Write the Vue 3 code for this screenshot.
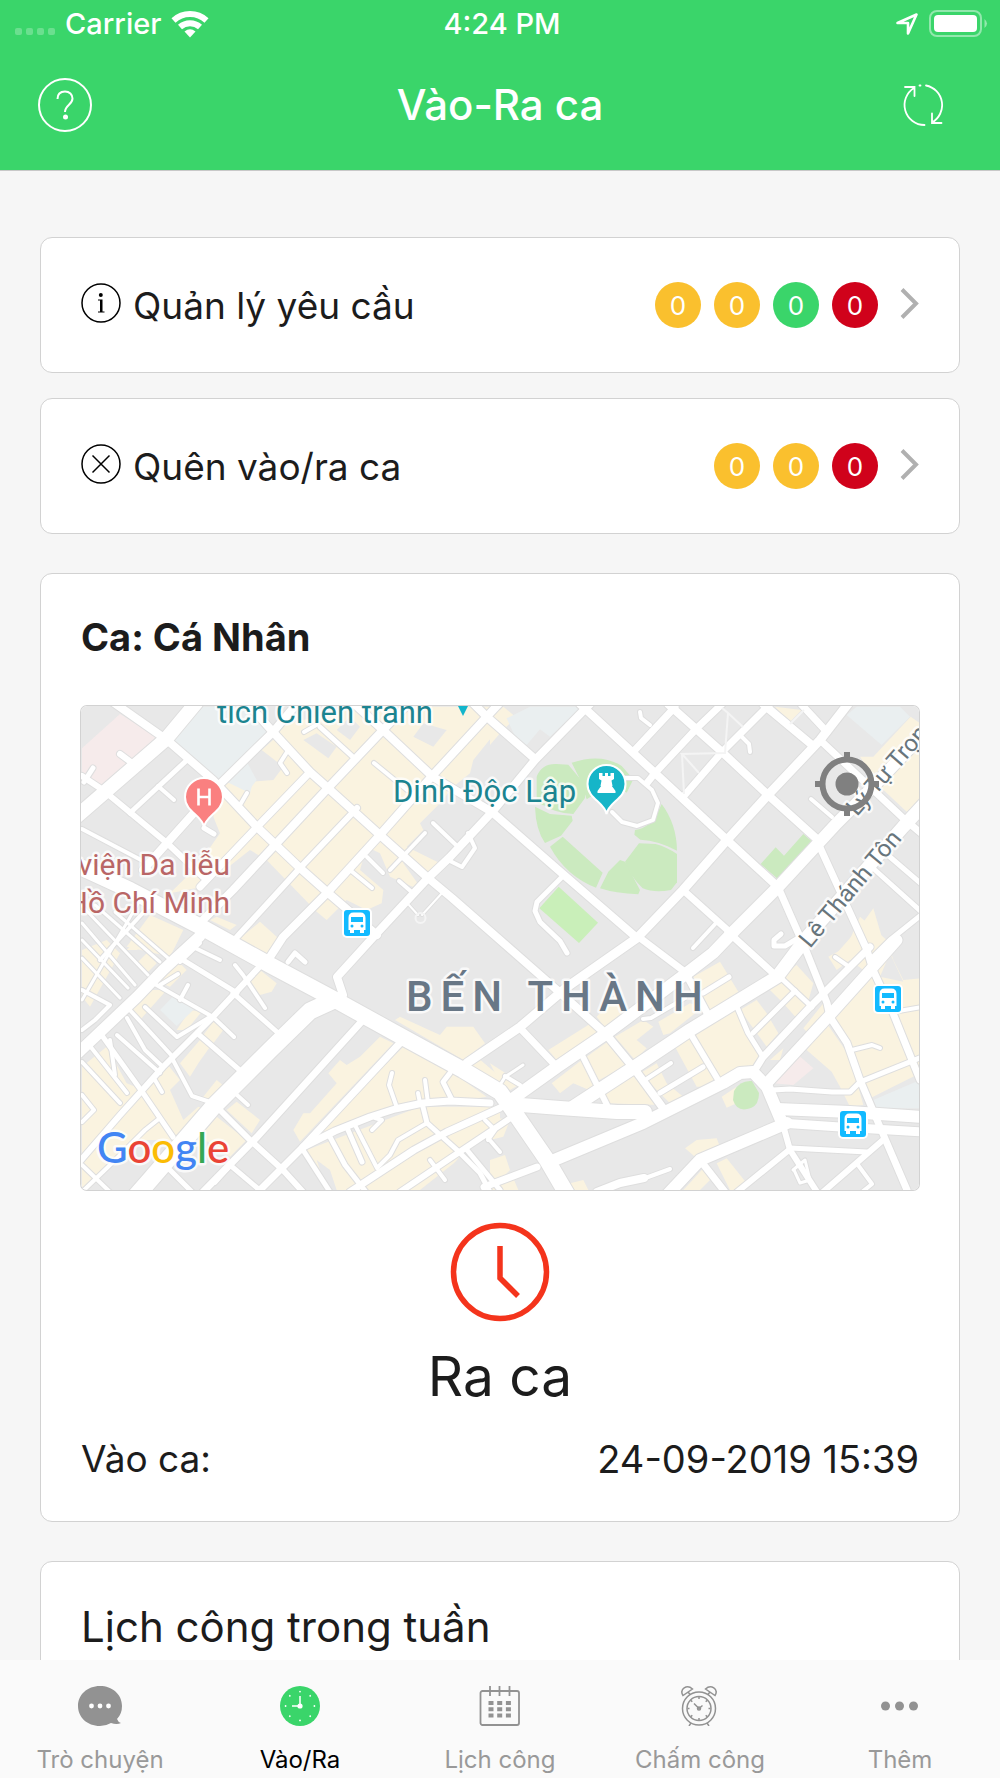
<script setup>
const requests = [
  { id: 'manage', icon: 'info', label: 'Quản lý yêu cầu', badges: ['amber', 'amber', 'green', 'red'] },
  { id: 'missed', icon: 'cross', label: 'Quên vào/ra ca', badges: ['amber', 'amber', 'red'] },
]

const tabs = [
  { id: 'chat', label: 'Trò chuyện' },
  { id: 'shift', label: 'Vào/Ra', active: true },
  { id: 'calendar', label: 'Lịch công' },
  { id: 'alarm', label: 'Chấm công' },
  { id: 'more', label: 'Thêm' },
]

// Map land use, drawn in four tiles at three units per map pixel
const tiles = [
  {
    at: 'translate(70 690) scale(.33333)',
    blocks: [
      ['cream', '620,110 860,50 1290,50 1290,110 1210,210 1200,250 1150,290 1110,340 1050,400 1060,420 1010,470 1110,520 1050,600 960,560 930,490 890,470 870,540 940,600 935,640 890,660 830,630 770,690 740,665 590,510 540,480 400,590 300,610 380,530 450,430 430,380 455,290 480,275 540,300 550,275 610,270 640,230 575,180 620,140'],
      ['cream', '420,690 440,680 500,705 480,720'],
      ['cream', '510,745 570,695 625,745 600,800 480,780'],
      ['cream', '170,770 240,675 340,720 300,800'],
      ['land', '700,150 740,130 800,170 775,205'],
      ['land', '1060,100 1130,120 1090,170 1030,140'],
      ['land', '800,120 840,80 870,110 840,150'],
      ['land', '1050,590 1000,520 1020,500 1070,560'],
      ['blue', '300,150 400,50 590,50 600,130 540,190 440,300 420,270'],
      ['blue', '470,275 530,215 560,270 545,290 540,310'],
      ['pink', '36,175 150,72 258,140 100,292 36,250'],
    ],
  },
  {
    at: 'translate(490 690) scale(.33333)',
    blocks: [
      ['cream', '10,80 40,50 78,82 48,112'],
      ['cream', '0,110 30,130 0,165'],
      ['cream', '855,50 935,60 900,95'],
      ['cream', '1110,200 1150,200 1262,80 1290,100 1290,340 1250,365 1170,290'],
      ['cream', '1110,710 1150,655 1190,790 1040,790'],
      ['blue', '50,85 120,50 275,50 180,140 150,118 110,165 80,150'],
      ['blue', '1070,75 1100,50 1230,50 1260,80 1175,165'],
    ],
  },
  {
    at: 'translate(70 940) scale(.33333)',
    blocks: [
      ['cream', '36,30 110,0 150,40 60,200 36,170'],
      ['cream', '170,30 200,0 220,20 200,30'],
      ['cream', '200,70 230,40 260,70 230,100'],
      ['cream', '180,210 230,150 290,150 210,240'],
      ['cream', '36,380 110,320 170,430 220,450 290,370 330,420 300,450 340,540 385,500 410,510 300,600 200,600 60,745 36,740'],
      ['cream', '330,370 390,300 420,320 385,370 360,410'],
      ['cream', '530,130 570,90 620,130 605,155 570,165'],
      ['cream', '250,120 320,60 350,90 300,140'],
      ['cream', '320,270 360,210 395,215 350,270'],
      ['cream', '400,285 430,245 460,270 430,310'],
      ['cream', '400,470 440,420 465,440 430,490'],
      ['cream', '500,0 625,0 575,65 440,10'],
      ['cream', '470,510 500,485 570,540 545,580'],
      ['cream', '390,590 440,530 530,600 480,650'],
      ['cream', '670,570 700,520 720,520 800,430 775,400 810,360 830,375 870,350 930,290 970,310 690,605'],
      ['cream', '975,240 990,230 1110,285 1130,260 1210,260 1245,310 1180,360'],
      ['cream', '1000,320 1150,400 1250,470 1050,500 900,530 780,580 750,570'],
      ['cream', '710,630 1050,500 1290,500 1290,560 1050,750 790,750'],
      ['cream', '1195,370 1220,350 1290,410 1290,430'],
      ['land', '1200,610 1290,540 1290,750 1090,750'],
      ['land', '740,660 780,690 800,750 770,750'],
      ['blue', '270,210 310,168 372,208 320,258'],
    ],
  },
  {
    at: 'translate(490 940) scale(.33333)',
    blocks: [
      ['cream', '175,330 310,245 330,270 200,360'],
      ['cream', '320,230 385,160 420,230 350,270'],
      ['cream', '375,290 460,240 490,260 440,300 470,325 435,360'],
      ['cream', '505,245 600,190 640,200 540,280 520,285'],
      ['cream', '610,110 690,65 745,155 660,210'],
      ['cream', '290,350 360,300 420,370 310,430'],
      ['cream', '185,430 275,360 320,460 250,430 210,460'],
      ['cream', '350,490 340,460 435,405 510,495'],
      ['cream', '450,400 500,370 530,430 580,470 540,490'],
      ['cream', '555,320 600,290 690,440 620,440'],
      ['cream', '615,280 735,205 820,350 780,390 695,420'],
      ['cream', '830,140 920,75 970,130 950,200 920,235 880,190'],
      ['cream', '750,210 800,180 830,220 865,280 830,320'],
      ['cream', '940,265 1000,190 1010,210 950,275'],
      ['cream', '840,360 880,325 870,360'],
      ['cream', '1015,50 1070,20 1110,-70 1190,0 1210,60 1240,120 1290,115 1290,400 1130,480 1100,410 1030,230 1120,90 1080,60 1040,90'],
      ['land', '1170,110 1200,40 1240,125'],
      ['cream', '950,330 1010,250 1080,350 1120,495 1080,500 1050,440 1025,395'],
      ['cream', '0,370 95,430 60,450 30,430'],
      ['cream', '585,625 620,600 680,595 690,620 620,655'],
      ['cream', '680,670 710,655 770,730 740,750 720,750'],
      ['cream', '580,750 640,685 660,720 630,750'],
      ['cream', '240,730 280,720 295,750 240,750'],
      ['cream', '0,660 45,645 60,690 0,750'],
      ['cream', '0,720 70,715 85,750 0,750'],
      ['cream', '0,530 60,540 40,590 0,600'],
      ['cream', '695,470 740,440 740,490 710,503'],
      ['blue', '1150,480 1290,420 1290,505 1160,505'],
      ['pink', '850,430 925,345 970,385 910,435'],
    ],
  },
]

// [width, points]
const roads = [
  [14, '76,817 166,739 196,703'],
  [8, '110,700 167,740 213,780 257,827 300,868 327,892 377,935'],
  [8, '247,703 273,732 310,772 328,788 380,835 428,878 452,898 500,940 557,990 605,1033 633,1067 663,1108'],
  [8, '350,700 383,730 433,777 492,812 564,875 637,938'],
  [7, '640,938 685,972 707,1013'],
  [8, '470,700 487,717 535,759'],
  [8, '580,704 655,773 727,840 778,887'],
  [8, '668,704 722,752 768,795 818,840'],
  [8, '763,704 812,745'],
  [7, '801,704 827,732'],
  [7, '820,740 903,818 922,834'],
  [8, '590,704 535,760 493,811 450,857 428,878 377,933 337,977 343,995'],
  [8, '505,697 433,775 380,835 327,893 283,937 270,957'],
  [8, '412,700 383,730 328,788 275,845 233,890 203,920'],
  [8, '300,700 273,732 217,787 167,843 143,870'],
  [7, '310,772 257,827 200,887'],
  [6, '357,808 300,868 237,937'],
  [7, '770,704 722,752 683,797'],
  [7, '722,704 697,728 655,773 647,783'],
  [7, '675,707 633,752'],
  [9, '848,704 820,740 768,795 727,840 683,890 637,938 567,987 520,1027 467,1063'],
  [12, '925,732 870,790 837,823 778,887 735,930 713,953 687,973 607,1033 557,1067 508,1102'],
  [13, '925,803 903,827 807,937 777,977 690,1030 633,1068 573,1107'],
  [7, '778,887 800,937 807,953 827,1003 830,1017 847,1043 860,1080 877,1120 907,1190'],
  [7, '818,843 867,950 873,970 893,1013 920,1080'],
  [11, '897,940 873,967 830,1015 767,1083'],
  [7, '870,947 810,1007 763,1057 753,1073'],
  [5, '925,912 890,940 870,960'],
  [5, '875,870 925,915'],
  [5, '890,857 925,887'],
  [16, '76,865 130,890 203,928 270,965 330,997 397,1034 463,1070 500,1092 512,1109 547,1160 568,1196'],
  [17, '334,1000 310,1011 270,1050 213,1107 150,1180 136,1196'],
  [11, '200,936 163,970 137,997 78,1053'],
  [7, '363,1020 257,1137 203,1192'],
  [7, '400,1043 303,1147 258,1192'],
  [7, '303,1147 335,1131 370,1117 395,1109 423,1103 450,1101 490,1103'],
  [14, '508,1104 560,1108 617,1112 645,1112'],
  [12, '547,1163 643,1123 723,1083 740,1073 753,1072 767,1087 783,1125'],
  [6, '783,1125 790,1150 817,1192'],
  [12, '777,1109 850,1112 922,1117'],
  [9, '780,1123 840,1127 922,1132'],
  [12, '787,1123 700,1160 668,1194'],
  [5, '773,1090 790,1089 832,1092 850,1092 860,1082 922,1057'],
  [4, '893,1012 922,1007'],
  [5, '790,1148 867,1152'],
  [6, '883,1140 823,1192'],
  [6, '789,1150 737,1192'],
  [4, '670,1169 640,1180'],
  [8, '644,1178 620,1183 597,1192'],
  [7, '700,1160 725,1192'],
  [7, '484,1187 537,1167'],
  [7, '520,1028 557,1067'],
  [6, '583,1057 607,1105'],
  [6, '690,1033 720,1083'],
  [5, '737,1007 748,1033 763,1057'],
  [5, '780,977 812,1007'],
  [5, '795,991 753,1033'],
  [5, '729,977 703,993'],
  [5, '660,1093 703,1067'],
  [4, '645,1080 671,1063'],
  [7, '728,932 773,973'],
  [7, '683,890 733,935'],
  [4, '643,1019 651,1018 685,998'],
  [4, '717,922 693,948'],
  [4, '625,778 638,778 652,790 658,803 653,820 637,826 622,822 612,812'],
  [5, '562,877 537,902 535,911 540,922 560,941 567,953'],
  [5, '781,934 774,940 774,946 785,946 800,937'],
  [4, '811,799 832,817'],
  [4, '640,712 641,718 650,725'],
  [4, '741,736 749,744 750,752'],
  [4, '520,1085 505,1076'],
  [3, '523,1065 505,1077 500,1085'],
  [4, '852,1050 872,1045 880,1048'],
  [4, '835,957 848,966'],
  [3, '793,1170 805,1160 810,1180 800,1183 794,1170'],
  [4, '858,1165 872,1184 862,1192'],
  // streets west of the boulevard
  [6, '82,776 103,790 167,843 203,877'],
  [5, '187,760 130,813'],
  [4, '158,786 174,800'],
  [4, '82,829 143,861 150,870'],
  [6, '120,754 132,763'],
  [5, '93,768 84,782'],
  [5, '204,828 214,834'],
  [4, '374,763 407,790'],
  [4, '433,823 457,846'],
  [4, '468,833 475,848 462,867 448,860'],
  [4, '367,857 383,873'],
  [4, '350,870 372,888'],
  [4, '399,881 414,894'],
  [4, '425,833 390,870'],
  [4, '287,752 280,763 287,773'],
  [4, '247,793 240,805'],
  [5, '320,727 353,757'],
  [4, '304,732 318,724'],
  [2, '442,893 422,915'],
  [2, '409,905 418,915'],
  [6, '76,1166 120,1115 163,1067 210,1020 263,963'],
  [4, '82,1192 110,1165 145,1130 160,1118'],
  [3, '82,923 135,985'],
  [3, '82,940 128,988'],
  [3, '82,958 120,998'],
  [3, '82,906 148,975'],
  [3, '95,905 160,962'],
  [3, '115,912 168,958'],
  [3, '140,900 82,1000'],
  [4, '150,905 100,960'],
  [4, '82,990 110,1005 95,1020 82,1030'],
  [4, '128,1008 173,1057'],
  [4, '145,1007 177,1037 210,1017'],
  [4, '117,1035 160,1073'],
  [4, '153,983 213,1017'],
  [5, '103,1037 143,1093 173,1137'],
  [4, '90,1046 127,1093'],
  [4, '82,1062 120,1103'],
  [4, '110,1040 115,1075'],
  [4, '82,1095 94,1110 82,1122'],
  [4, '173,1060 192,1096 210,1102'],
  [5, '197,1033 243,1073'],
  [4, '213,1017 234,1037'],
  [5, '233,993 277,1032'],
  [5, '183,960 237,993'],
  [4, '193,947 220,960'],
  [4, '180,962 200,943'],
  [4, '235,965 243,975 265,1008'],
  [4, '160,985 178,974'],
  [4, '188,985 180,1000'],
  [5, '288,962 295,953 305,962'],
  [6, '220,1110 250,1140 283,1170 303,1192'],
  [5, '170,1170 192,1192'],
  [5, '230,1165 262,1192'],
  [4, '215,1183 240,1155'],
  [4, '237,1095 248,1105'],
  [4, '155,1080 162,1092'],
  [4, '163,1067 145,1050 127,1018'],
  [4, '82,1165 110,1192'],
  // centre
  [5, '303,1150 330,1192'],
  [5, '330,1137 345,1165 366,1192'],
  [5, '348,1130 362,1162'],
  [4, '372,1130 382,1120 375,1118'],
  [7, '350,1192 414,1150 447,1132 500,1108'],
  [6, '400,1192 455,1155 515,1115'],
  [5, '423,1107 427,1123 457,1150 480,1173 490,1192'],
  [4, '427,1123 398,1140 390,1155 377,1168 355,1125'],
  [4, '430,1160 445,1180'],
  [4, '392,1073 389,1085 396,1105'],
  [4, '425,1080 428,1103'],
  [4, '418,1093 420,1103'],
  [5, '450,1073 443,1082 452,1100'],
  [4, '488,1138 500,1152'],
  [4, '485,1120 495,1130 488,1140'],
  [5, '467,1150 500,1190'],
]

const stops = [
  [357, 923],
  [888, 999],
  [853, 1124],
]
</script>

<template>
  <div class="app">
    <header class="header">
      <div class="status">
        <div class="status-left">
          <span class="signal"><i v-for="n in 4" :key="n"></i></span>
          <span>Carrier</span>
          <svg class="wifi" width="38" height="28" viewBox="0 0 38 28" aria-hidden="true">
            <g fill="none" stroke="#fff" stroke-width="6">
              <path d="M2.500 10.500a24.500 24.500 0 0 1 33 0" />
              <path d="M9 17a15 15 0 0 1 20 0" />
            </g>
            <path d="M13.500 21.500q5.500-4.500 11 0L19 27.500z" fill="#fff" />
          </svg>
        </div>
        <time>4:24 PM</time>
        <div class="status-right">
          <svg width="24" height="24" viewBox="0 0 24 24" aria-hidden="true">
            <path d="M21.500 2.500 13 21.500V11H2.500z" fill="none" stroke="#fff" stroke-width="2.600" stroke-linejoin="round" />
          </svg>
          <svg width="60" height="28" viewBox="0 0 60 28" aria-hidden="true">
            <rect x="1" y="1" width="51" height="25" rx="7" fill="none" stroke="#fff" stroke-opacity=".45" stroke-width="2" />
            <rect x="5" y="5" width="43" height="17" rx="4" fill="#fff" />
            <path d="M55.500 9q5 4.500 0 9z" fill="#fff" fill-opacity=".45" />
          </svg>
        </div>
      </div>
      <div class="navbar">
        <button class="nav-btn" type="button" aria-label="Trợ giúp">
          <svg width="54" height="54" viewBox="0 0 54 54" aria-hidden="true">
            <g fill="none" stroke="#fff">
              <circle cx="27" cy="27" r="26" stroke-width="2" />
              <path d="M19.500 21c0-5 3-7.500 7.500-7.500s7.500 3 7.500 7c0 6-7.500 6.500-7.500 13.500" stroke-width="2" />
            </g>
            <circle cx="27.500" cy="39" r="2.500" fill="#fff" />
          </svg>
        </button>
        <h1>Vào-Ra ca</h1>
        <button class="nav-btn refresh" type="button" aria-label="Làm mới">
          <svg width="42" height="42" viewBox="0 0 42 42" fill="none" stroke="#fff" stroke-width="1.800" stroke-linecap="round" aria-hidden="true">
            <path d="M25 1.500A20 20 0 0 1 31 38.500M31 29.500v9.500h9.500" />
            <path d="M23.500 41A20 20 0 0 1 13 4M4 3h9.500v9" />
            <path d="M18.500 1.500h1" />
          </svg>
        </button>
      </div>
    </header>

    <main class="content">
      <nav class="requests">
        <a v-for="row in requests" :key="row.id" class="card request" :href="'#' + row.id">
          <svg class="request-icon" width="40" height="40" viewBox="0 0 40 40" fill="none" stroke="#000" stroke-width="1.500" aria-hidden="true">
            <circle cx="20" cy="20" r="19" />
            <path v-if="row.icon === 'cross'" d="M11.500 11.500l17 17M28.500 11.500l-17 17" />
            <g v-else fill="#000" stroke="none">
              <circle cx="19.800" cy="12" r="2" />
              <path d="M17 16.500h4.500v12h2v1h-6.500v-1h2v-11h-2z" />
            </g>
          </svg>
          <span class="request-label">{{ row.label }}</span>
          <span class="badges">
            <span v-for="(tone, i) in row.badges" :key="i" class="badge" :class="tone">0</span>
          </span>
          <svg class="chevron" width="19" height="32" viewBox="0 0 19 32" aria-hidden="true">
            <path d="M2 2.500 16 16.500 2 30.500" fill="none" stroke="#b0b0b0" stroke-width="4" />
          </svg>
        </a>
      </nav>

      <section class="card shift">
        <h2>Ca: Cá Nhân</h2>
        <div class="map">
          <svg class="map-canvas" viewBox="81 706 838 484" role="img" aria-label="Bản đồ Bến Thành">
            <rect x="81" y="706" width="838" height="484" class="land" />
            <g v-for="tile in tiles" :key="tile.at" :transform="tile.at">
              <polygon v-for="(b, i) in tile.blocks" :key="i" :class="b[0]" :points="b[1]" />
            </g>
            <g class="park" transform="translate(490 690) scale(.33333)">
              <path d="M140 260q15-40 60-38l35 2 50 60v40l-35 48q-60-5-85-25l-25-7z" />
              <path d="M245 218q90-30 150 10l35 40-20 40-40-30-80 50-20-60z" />
              <path d="M135 350l45 22 65 5 3 15-35 45-48 22q-28-40-30-109z" />
              <path d="M180 470l38-30 120 108-20 45q-90-35-138-123z" />
              <path d="M390 510l15 5 45 85-5 13q-70-3-115-18l25-50z" />
              <path d="M405 515l42-55 50 2q35 10 64 30v85l-18 23q-50 10-85-5-40-40-53-80z" />
              <path d="M435 420q50-5 80-78 45 60 46 140-55-30-110-33l-18-15z" />
              <path d="M148 655l58-65 118 108-57 61z" fill="#c9efb9" />
              <path d="M812 522l45-50 25 25 58-65 27 23-100 115z" />
            </g>
            <path class="park" d="M734 1091q6-11 18-10l7 12q0 12-8 15-14 5-18-8z" />
            <g class="casing">
              <polyline v-for="(r, i) in roads" :key="i" :points="r[1]" :stroke-width="r[0] + 2" />
            </g>
            <g class="road">
              <polyline v-for="(r, i) in roads" :key="i" :points="r[1]" :stroke-width="r[0]" />
            </g>
            <g fill="none" stroke="#f4f4f4" stroke-width="2">
              <path d="M722 708l6 5-3 40-43 1 17 19M682 754l2 40M728 713l15 14M790 724l14-14" />
              <circle cx="420.500" cy="918" r="5" />
            </g>

            <path d="M458 706h10l-5 10z" fill="#12b5cb" />
            <g v-for="([x, y], i) in stops" :key="i" :transform="`translate(${x} ${y})`">
              <rect x="-15" y="-15" width="30" height="30" rx="5" fill="#fff" />
              <rect x="-13" y="-13" width="26" height="26" rx="3" fill="#12baff" />
              <path d="M-8.500 7V-5q0-5.500 5-5.500h7q5 0 5 5.500V7H7v3H3V7h-6v3h-4V7z" fill="#fff" />
              <rect x="-6" y="-6" width="12" height="5" fill="#12baff" />
              <circle cx="-5" cy="3" r="1.500" fill="#12baff" />
              <circle cx="5" cy="3" r="1.500" fill="#12baff" />
            </g>

            <g transform="translate(204 797)">
              <path d="M0 30C-2 18-19 15-19 0a19 19 0 0 1 38 0C19 15 2 18 0 30z" fill="#fa8080" stroke="#fff" stroke-width="2" />
              <path d="M-5.500-8.500v17M5.500-8.500v17M-5.500 0h11" stroke="#fff" stroke-width="2.600" fill="none" />
            </g>
            <g transform="translate(606.500 784)">
              <path d="M0 30C-2 18-19 15-19 0a19 19 0 0 1 38 0C19 15 2 18 0 30z" fill="#16b5c8" stroke="#fff" stroke-width="2" />
              <path d="M-7.500-11h3.500v3h2.500v-3h3v3H4v-3h3.500v6l-2.500 1.500 1 5.500h-12l1-5.500-2.500-1.500zM-5 1.500H5L9 7v2H-9V7z" fill="#fff" />
            </g>

            <g class="labels">
              <text x="217" y="723" class="poi">tích Chiến tranh</text>
              <text x="393" y="802" class="poi">Dinh Độc Lập</text>
              <text x="230" y="875" class="clinic">viện Da liễu</text>
              <text x="230" y="913" class="clinic">Hồ Chí Minh</text>
              <text x="406" y="1011" class="district">BẾN THÀNH</text>
              <text transform="translate(857 817) rotate(-49)" class="street">Lý Tự Trọng</text>
              <text transform="translate(810 949) rotate(-50)" class="street">Lê Thánh Tôn</text>
              <text x="97" y="1163" class="google"><tspan fill="#4285f4">G</tspan><tspan fill="#ea4335">o</tspan><tspan fill="#fbbc05">o</tspan><tspan fill="#4285f4">g</tspan><tspan fill="#34a853">l</tspan><tspan fill="#ea4335">e</tspan></text>
            </g>
          </svg>
          <button class="locate" type="button" aria-label="Vị trí của tôi">
            <svg width="64" height="64" viewBox="0 0 64 64" aria-hidden="true">
              <g fill="none" stroke="#808080" stroke-width="6">
                <circle cx="32" cy="32" r="24.500" />
                <path d="M32 0v8M32 56v8M0 32h8M56 32h8" />
              </g>
              <circle cx="32" cy="32" r="11.500" fill="#808080" />
            </svg>
          </button>
        </div>
        <button class="check-out" type="button">
          <svg width="100" height="100" viewBox="0 0 100 100" fill="none" stroke="#f4341c" stroke-width="5.500" aria-hidden="true">
            <circle cx="50" cy="50" r="46.500" />
            <path d="M50 24v32l18 18" />
          </svg>
          <span>Ra ca</span>
        </button>
        <dl class="entry">
          <dt>Vào ca:</dt>
          <dd>24-09-2019 15:39</dd>
        </dl>
      </section>

      <section class="card week">
        <h2>Lịch công trong tuần</h2>
      </section>
    </main>

    <nav class="tabs">
      <a v-for="tab in tabs" :key="tab.id" class="tab" :class="{ active: tab.active }" :href="'#' + tab.id">
        <svg v-if="tab.id === 'chat'" width="46" height="40" viewBox="0 0 46 40" aria-hidden="true">
          <path d="M23 0C35 0 45 8 45 20q0 8-5 13 1 3 4 4-4 2-10 0-5 3-11 3C10 40 1 31 1 20S10 0 23 0z" fill="#929292" />
          <g fill="#fff"><circle cx="14.500" cy="20" r="2.400" /><circle cx="23" cy="20" r="2.400" /><circle cx="31.500" cy="20" r="2.400" /></g>
        </svg>
        <svg v-else-if="tab.id === 'shift'" width="40" height="40" viewBox="0 0 40 40" aria-hidden="true">
          <circle cx="20" cy="20" r="20" fill="#3ad56a" />
          <path d="M20 20V10M20 20h-8" stroke="#fff" stroke-width="1.500" />
          <g fill="#fff">
            <circle cx="20" cy="20" r="2.600" />
            <circle v-for="n in 8" :key="n" cx="20" cy="5.600" r=".9" :transform="`rotate(${n * 45} 20 20)`" />
          </g>
        </svg>
        <svg v-else-if="tab.id === 'calendar'" width="42" height="40" viewBox="0 0 42 40" fill="none" stroke="#929292" stroke-width="1.800" aria-hidden="true">
          <rect x="1.500" y="5" width="38.500" height="34" rx="2" />
          <path d="M11 0v10M20.500 0v10M30.500 0v10" />
          <path d="M9.500 17h23M9.500 23.300h23M9.500 29.500h23" stroke-width="4" stroke-dasharray="5 3.700" />
        </svg>
        <svg v-else-if="tab.id === 'alarm'" width="40" height="40" viewBox="0 0 40 40" fill="none" stroke="#929292" stroke-width="1.500" aria-hidden="true">
          <circle cx="19" cy="22.500" r="16.500" />
          <circle cx="19" cy="22.500" r="12" />
          <path d="M3 9.500C-1 3 7-2 12.500 3zM35 9.500C39 3 31-2 25.500 3zM8 6l2.500 3M30 6l-2.500 3M11 37l-2 3M27 37l2 3" />
          <path d="M14 17.500l5 5 3.500-3" />
          <circle cx="19" cy="22.500" r="1.500" />
          <path v-for="n in 8" :key="n" d="M19 11v2" :transform="`rotate(${n * 45} 19 22.500)`" />
        </svg>
        <svg v-else width="40" height="40" viewBox="0 0 40 40" fill="#929292" aria-hidden="true">
          <circle cx="5.500" cy="20" r="4.500" /><circle cx="19.500" cy="20" r="4.500" /><circle cx="33.500" cy="20" r="4.500" />
        </svg>
        <span>{{ tab.label }}</span>
      </a>
    </nav>
  </div>
</template>

<style>
body {
  margin: 0;
}
</style>

<style scoped>
.app {
  display: flex;
  flex-direction: column;
  height: 100vh;
  background: #f6f6f6;
  color: #1c1c1c;
  font-family: Inter, "Liberation Sans", sans-serif;
}

svg {
  display: block;
  flex: none;
}

button {
  padding: 0;
  border: 0;
  background: none;
  color: inherit;
  font: inherit;
}

a {
  color: inherit;
  text-decoration: none;
}

h1,
h2,
dl,
dd {
  margin: 0;
}

.header {
  flex: none;
  background: #3ad56a;
  border-bottom: 1px solid #c8c8c8;
  color: #fff;
}

.status {
  display: grid;
  grid-template-columns: 1fr auto 1fr;
  align-items: center;
  height: 47px;
  padding: 0 11px 0 15px;
  font-size: 29px;
  font-weight: 500;
}

.status-left,
.status-right {
  display: flex;
  align-items: center;
  gap: 10px;
}

.status-right {
  justify-content: flex-end;
}

.signal {
  display: flex;
  gap: 4px;
  padding-top: 16px;
}

.signal i {
  width: 7px;
  height: 7px;
  border-radius: 2px;
  background: rgba(255, 255, 255, 0.25);
}

.navbar {
  display: grid;
  grid-template-columns: 1fr auto 1fr;
  align-items: center;
  height: 116px;
  padding: 0 38px 7px;
}

.navbar h1 {
  font-size: 42px;
  font-weight: 500;
  line-height: 50px;
}

.refresh {
  justify-self: end;
  margin-right: 19px;
}

.nav-btn {
  display: flex;
}

.content {
  flex: 1;
  min-height: 0;
  overflow-y: auto;
  scrollbar-width: none;
  padding: 66px 40px 0;
}

.card {
  box-sizing: border-box;
  border: 1px solid #d2d2d2;
  border-radius: 12px;
  background: #fff;
  padding: 40px;
}

.requests {
  display: flex;
  flex-direction: column;
  gap: 25px;
}

.request {
  display: flex;
  align-items: center;
  min-height: 136px;
  font-size: 37px;
}

.request-icon,
.chevron {
  margin-bottom: 4px;
}

.request-label {
  flex: 1;
  margin-left: 12px;
}

.badges {
  display: flex;
  gap: 13px;
  margin-right: 22px;
}

.badge {
  display: flex;
  align-items: center;
  justify-content: center;
  width: 46px;
  height: 46px;
  border-radius: 50%;
  color: #fff;
  font-size: 26px;
}

.amber {
  background: #fac02e;
}

.green {
  background: #3ad56a;
}

.red {
  background: #d0021b;
}

.shift {
  margin-top: 39px;
  padding-top: 41px;
}

.shift h2 {
  font-size: 38px;
  font-weight: 700;
  line-height: 44px;
}

.map {
  position: relative;
  margin-top: 47px;
  border-radius: 6px;
  box-shadow: 0 0 0 1px #d2d2d2;
  overflow: hidden;
}

.map-canvas {
  width: 100%;
  height: auto;
}

.land {
  fill: #e8e8e8;
}

.cream {
  fill: #faf3e0;
}

.blue {
  fill: #eaeff0;
}

.pink {
  fill: #f6ebeb;
}

.park {
  fill: #cbeabf;
}

.casing,
.road {
  fill: none;
  stroke: #fff;
  stroke-linecap: round;
  stroke-linejoin: round;
}

.casing {
  stroke: #dedede;
}

.labels text {
  font-family: Roboto, sans-serif;
  font-size: 31px;
  paint-order: stroke;
  stroke: rgba(255, 255, 255, 0.75);
  stroke-width: 5px;
  stroke-linejoin: round;
}

.labels .poi {
  fill: #1b8490;
}

.labels .clinic {
  fill: #b96666;
  font-size: 30px;
  text-anchor: end;
}

.labels .district {
  fill: #687786;
  font-size: 42px;
  font-weight: 500;
  letter-spacing: 8px;
}

.labels .street {
  fill: #68757c;
  font-size: 24px;
}

.labels .google {
  font-family: Lato, sans-serif;
  font-size: 42px;
  font-weight: 500;
}

.locate {
  position: absolute;
  top: 46px;
  right: 40px;
}

.check-out {
  display: flex;
  flex-direction: column;
  align-items: center;
  gap: 21px;
  margin: 32px auto 0;
  font-size: 55px;
  line-height: 66px;
}

.entry {
  display: flex;
  justify-content: space-between;
  margin-top: 28px;
  font-size: 37px;
  line-height: 44px;
}

.entry dd {
  font-size: 38px;
}

.week {
  margin-top: 39px;
  min-height: 400px;
}

.week h2 {
  font-size: 42px;
  font-weight: 400;
  line-height: 50px;
}

.tabs {
  flex: none;
  display: grid;
  grid-template-columns: repeat(5, 1fr);
  height: 118px;
  background: #fafafa;
}

.tab {
  display: flex;
  flex-direction: column;
  align-items: center;
  gap: 19px;
  padding-top: 26px;
  color: #999;
  font-size: 24px;
  line-height: 30px;
}

.tab.active {
  color: #000;
}
</style>
